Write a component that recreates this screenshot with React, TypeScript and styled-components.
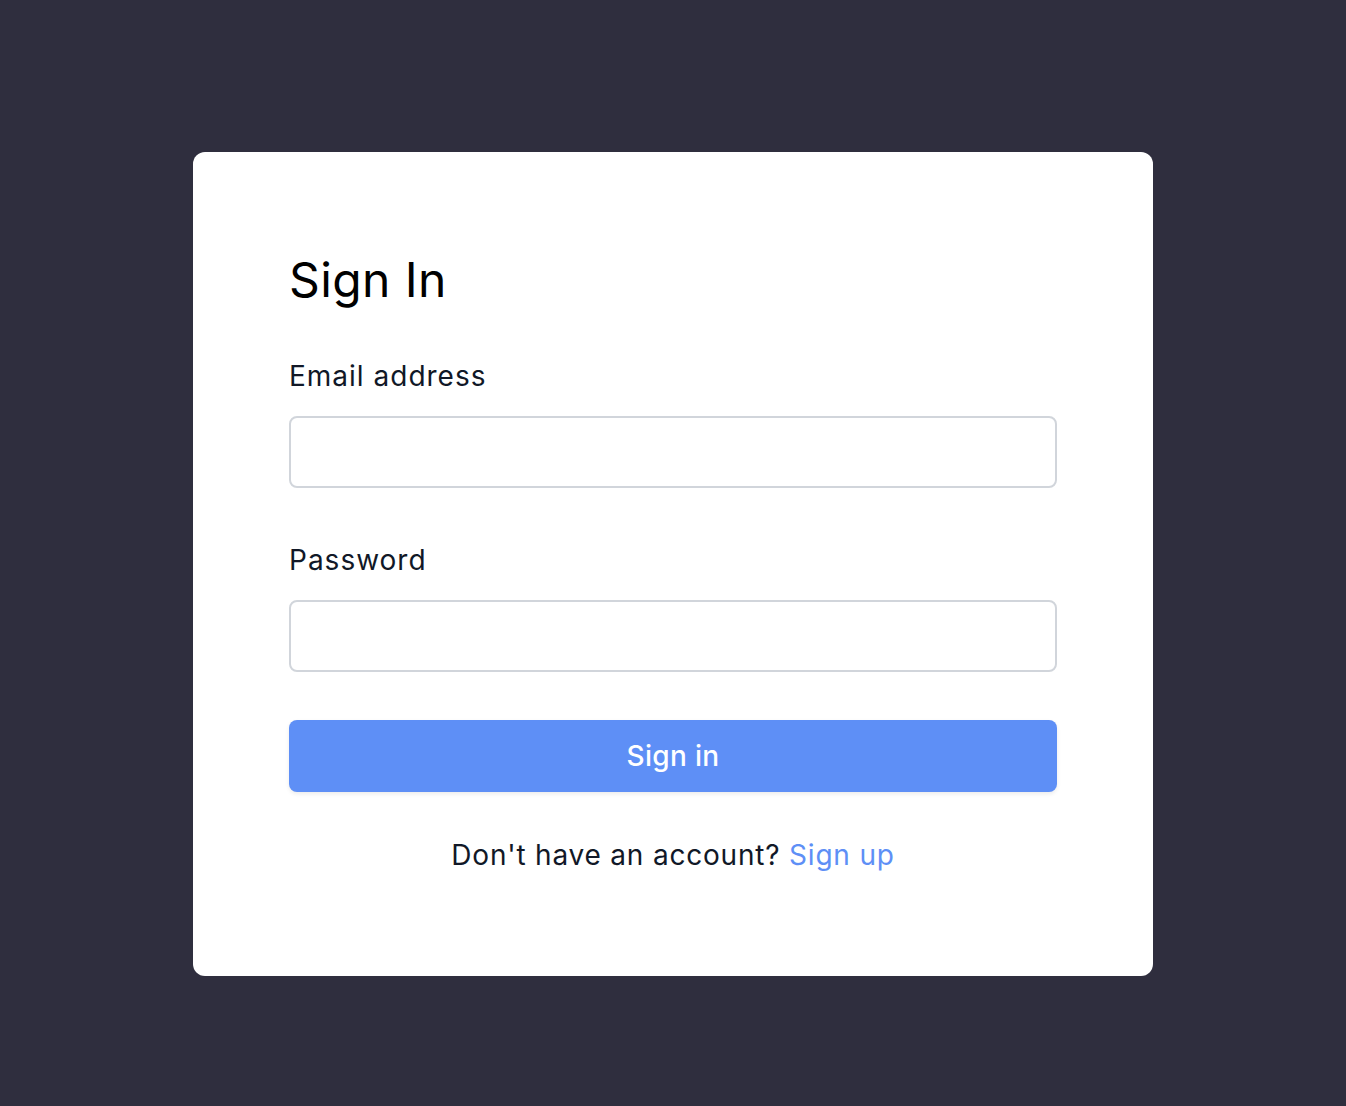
import { FC } from 'react';
import styled, { createGlobalStyle } from 'styled-components';

const GlobalStyle = createGlobalStyle`
  html, body {
    margin: 0;
    padding: 0;
    background: #2f2e3e;
  }
  body {
    font-family: Inter, "Noto Sans", sans-serif;
  }
  * {
    box-sizing: border-box;
  }
`;

const App: FC = () => {
  return (
    <>
      <GlobalStyle />
      <Page>
        <Card>
          <Title>Sign In</Title>
          <Field>
            <Label htmlFor="email">Email address</Label>
            <Input id="email" type="email" />
          </Field>
          <Field>
            <Label htmlFor="password">Password</Label>
            <Input id="password" type="password" />
          </Field>
          <Button type="button">Sign in</Button>
          <Footer>
            Don't have an account? <Link href="#">Sign up</Link>
          </Footer>
        </Card>
      </Page>
    </>
  );
};

export default App;

const Page = styled.div`
  min-height: 1106px;
  display: flex;
  justify-content: center;
  align-items: flex-start;
  padding-top: 152px;
`;

const Card = styled.div`
  width: 960px;
  height: 824px;
  background: #fff;
  border-radius: 12px;
  padding: 92px 96px;
  display: flex;
  flex-direction: column;
`;

const Title = styled.h1`
  margin: 0 0 40px;
  font-size: 48px;
  line-height: 72px;
  font-weight: 400;
  letter-spacing: 0.4px;
  color: #000;
`;

const Field = styled.div`
  display: flex;
  flex-direction: column;
  gap: 20px;

  & + & {
    margin-top: 52px;
  }
`;

const Label = styled.label`
  font-size: 28px;
  line-height: 40px;
  letter-spacing: 1px;
  color: #111827;
`;

const Input = styled.input`
  height: 72px;
  width: 100%;
  border: 2px solid #d1d5db;
  border-radius: 8px;
  padding: 0 20px;
  font: inherit;
  font-size: 26px;
  outline: none;
`;

const Button = styled.button`
  height: 72px;
  width: 100%;
  margin-top: 48px;
  border: none;
  border-radius: 8px;
  background: #5e8ff6;
  color: #fff;
  font-family: inherit;
  font-size: 28px;
  font-weight: 500;
  letter-spacing: 0.3px;
  box-shadow: 0 2px 4px rgba(0, 0, 0, 0.08);
  cursor: pointer;
`;

const Footer = styled.p`
  margin: 43px 0 0;
  text-align: center;
  font-size: 28px;
  line-height: 40px;
  letter-spacing: 0.8px;
  color: #111827;
`;

const Link = styled.a`
  color: #5e8ff6;
  text-decoration: none;
`;
